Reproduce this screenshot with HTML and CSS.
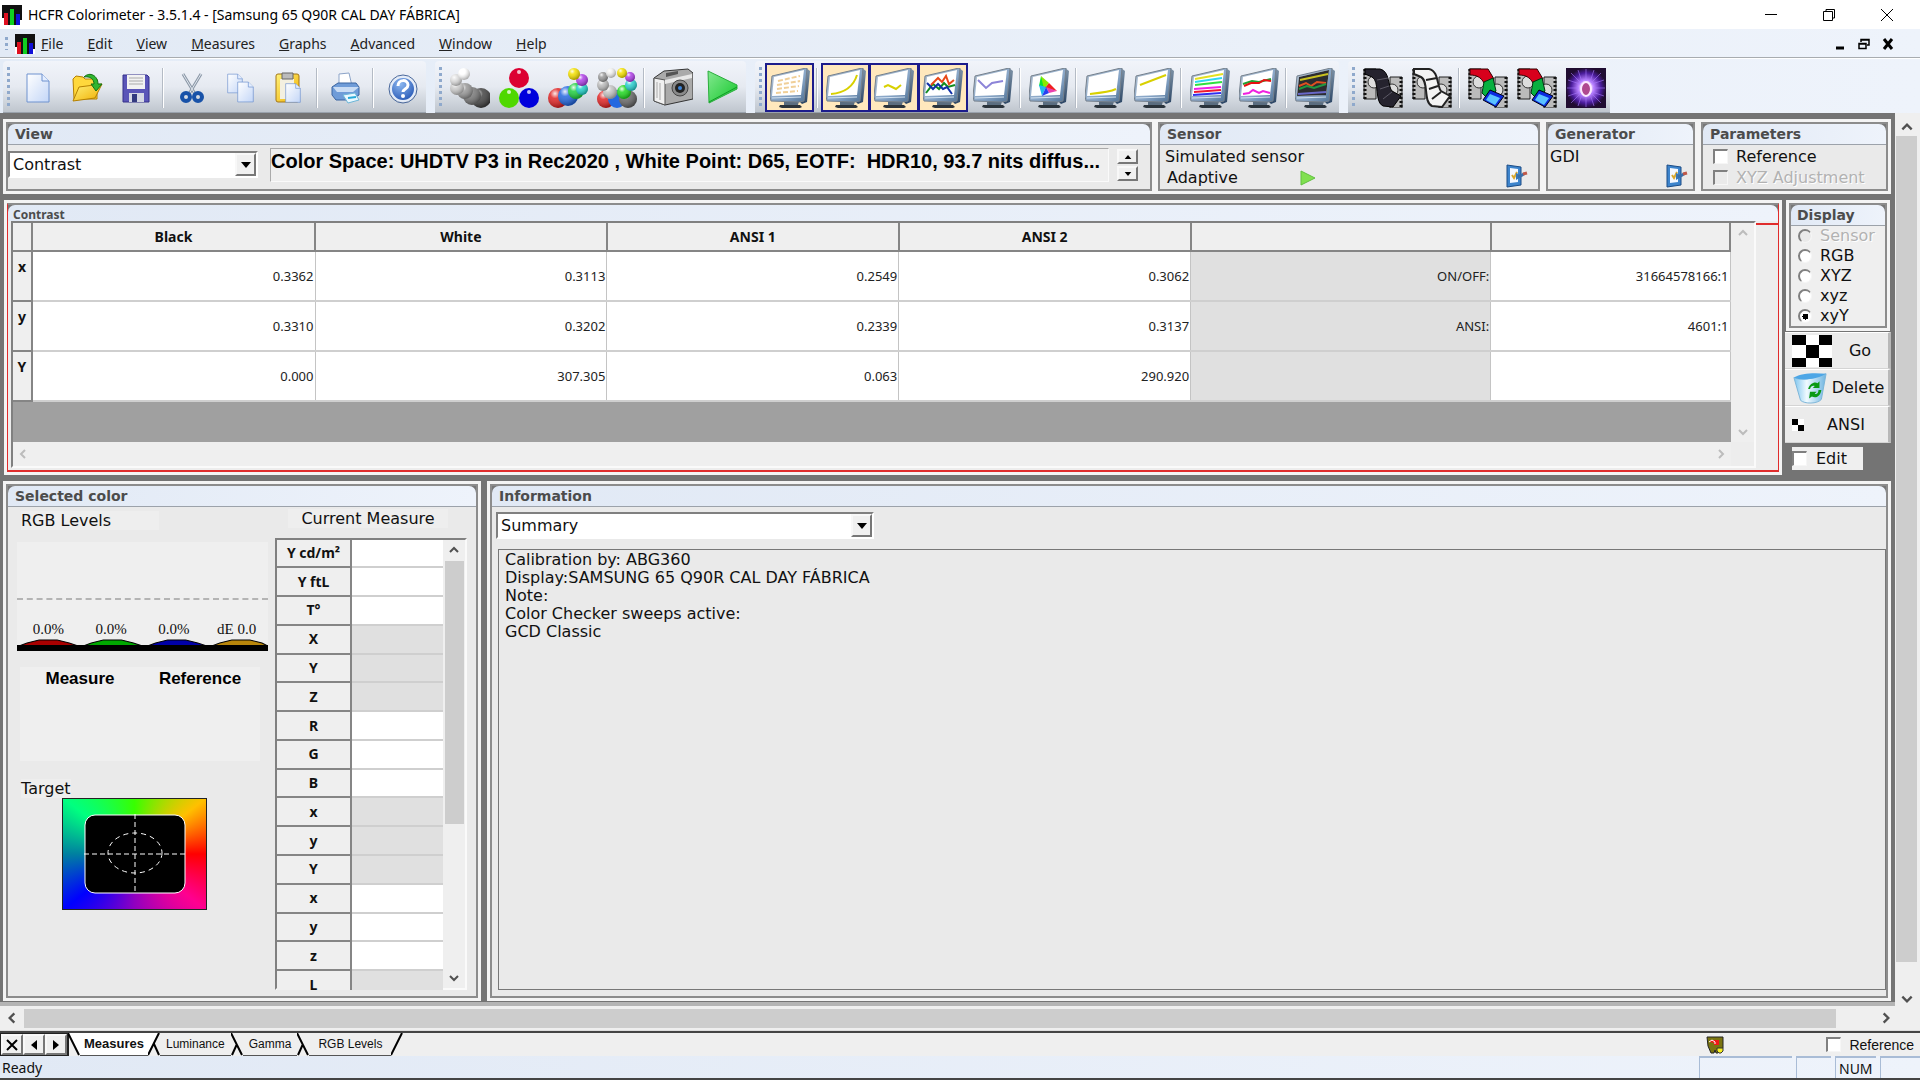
FILE: index.html
```html
<!DOCTYPE html>
<html lang="en">
<head>
<meta charset="utf-8">
<title>HCFR Colorimeter</title>
<link rel="stylesheet" href="styles.css">
</head>
<body>
<svg class="defs" aria-hidden="true">
  <defs>
    <linearGradient id="page" x1="0" y1="0" x2="1" y2="1"><stop offset="0" stop-color="#fff"/><stop offset="1" stop-color="#c3d6f7"/></linearGradient>
    <linearGradient id="bezel" x1="0" y1="0" x2="1" y2="1"><stop offset="0" stop-color="#b9c6d4"/><stop offset=".6" stop-color="#86a4c6"/><stop offset="1" stop-color="#4f7194"/></linearGradient>
    <linearGradient id="side" x1="0" y1="0" x2="0" y2="1"><stop offset="0" stop-color="#7e93a8"/><stop offset="1" stop-color="#2c4665"/></linearGradient>
    <linearGradient id="gold" x1="0" y1="0" x2="1" y2="1"><stop offset="0" stop-color="#fff27a"/><stop offset="1" stop-color="#f0ae00"/></linearGradient>
    <linearGradient id="play" x1="0" y1="0" x2="1" y2="1"><stop offset="0" stop-color="#84e890"/><stop offset="1" stop-color="#14c82c"/></linearGradient>
    <linearGradient id="bin" x1="0" y1="0" x2="1" y2="0"><stop offset="0" stop-color="#7cc4ee"/><stop offset=".4" stop-color="#f0faff"/><stop offset="1" stop-color="#6fb4e0"/></linearGradient>
    <radialGradient id="shine" cx=".35" cy=".28" r=".7"><stop offset="0" stop-color="#fff" stop-opacity=".9"/><stop offset=".35" stop-color="#fff" stop-opacity=".15"/><stop offset="1" stop-color="#000" stop-opacity=".3"/></radialGradient>
    <radialGradient id="blue" cx=".4" cy=".3" r=".8"><stop offset="0" stop-color="#8db8f0"/><stop offset="1" stop-color="#1d4fb0"/></radialGradient>
    <radialGradient id="nova"><stop offset="0" stop-color="#c05a9a"/><stop offset=".13" stop-color="#b05090"/><stop offset=".2" stop-color="#fff0ff"/><stop offset=".4" stop-color="#b880ff"/><stop offset=".75" stop-color="#4a1c9c"/><stop offset="1" stop-color="#200c30"/></radialGradient>
    <symbol id="logo" viewBox="0 0 20 20"><path d="M0 0h20v20H0z" fill="#111"/><path d="M2 8h4v12H2z" fill="#e01020"/><path d="M8 4h4v16H8z" fill="#10d020"/><path d="M14 9h4v11h-4z" fill="#1010d8"/><path d="M0 13h2v7H0zM18 15h2v5h-2z" fill="#fff"/></symbol>
    <symbol id="monitor" viewBox="0 0 40 40">
      <path d="M10 37h20l2 2-2 1H12l-3-1z" fill="#2b343c"/>
      <path d="M14 33h15l-1 4H14z" fill="#5a6d80"/>
      <path d="M36 0l4 3-3 31-5 2-3-3z" fill="url(#side)"/>
      <path d="M2 8L36 0h1l-3 33-5 1-28-1-1-5z" fill="url(#bezel)" stroke="#75808c"/>
      <path d="M4 9L34 2l-3 25-29 1z" fill="#fff"/>
      <path d="M2 30l29-1" stroke="#d3e2f1" stroke-width="1"/>
    </symbol>
    <symbol id="reel" viewBox="0 0 40 40">
      <path d="M1 1v30h12V1zM27 9v31h12V9z" fill="#bbb" stroke="#222"/>
      <path d="M2 1v30M38 9v31" stroke="#111" stroke-width="3" stroke-dasharray="2 2"/>
      <circle cx="11" cy="14" r="6" fill="#ddd" stroke="#333"/><circle cx="29" cy="22" r="6" fill="#ddd" stroke="#333"/>
    </symbol>
    <symbol id="rgbreel" viewBox="0 0 40 40">
      <use href="#reel"/>
      <path d="M2 1h18l6 10-10 4c-3-6-8-8-14-8z" fill="#d8001c" stroke="#300"/>
      <path d="M16 14l9-4 3 13-8 8-6-6z" fill="#08b040" stroke="#031"/>
      <path d="M22 22l14 6-8 11-13-7z" fill="#0a2ae0" stroke="#001"/><path d="M22 26l10 4-5 7-9-5z" fill="#5ac2ff"/>
    </symbol>
    <symbol id="sheet" viewBox="0 0 24 30"><path d="M1 1h15l7 7v21H1z" fill="url(#page)" stroke="#6f92cf"/><path d="M16 1v7h7" fill="#e4eeff" stroke="#6f92cf"/></symbol>
    <symbol id="config" viewBox="0 0 24 24"><path d="M3 1l14 2v18l-14 2z" fill="#3d84cc" stroke="#1c4c86"/><path d="M6 4l8 1v13l-8 1z" fill="#f4f8ff"/><path d="M8 11l2 3 3-6" fill="none" stroke="#d8a830" stroke-width="2"/><path d="M12 16v-7l7 3z" fill="#3a78b8"/><path d="M14 13l6-3" stroke="#3a6ea8" stroke-width="3"/><path d="M19 10l4-1" stroke="#c05848" stroke-width="3"/></symbol>
    <symbol id="up" viewBox="0 0 12 12"><path d="M2 8l4-4 4 4" fill="none" stroke="currentColor" stroke-width="2"/></symbol>
    <symbol id="down" viewBox="0 0 12 12"><path d="M2 4l4 4 4-4" fill="none" stroke="currentColor" stroke-width="2"/></symbol>
    <symbol id="left" viewBox="0 0 12 12"><path d="M8 2L4 6l4 4" fill="none" stroke="currentColor" stroke-width="2"/></symbol>
    <symbol id="right" viewBox="0 0 12 12"><path d="M4 2l4 4-4 4" fill="none" stroke="currentColor" stroke-width="2"/></symbol>
    <symbol id="tri-down" viewBox="0 0 10 6"><path d="M0 0h10L5 6z"/></symbol>
    <symbol id="tri-up" viewBox="0 0 10 6"><path d="M0 6h10L5 0z"/></symbol>
  </defs>
</svg>

<header class="titlebar">
  <svg class="logo"><use href="#logo"/></svg>
  <h1>HCFR Colorimeter - 3.5.1.4 - [Samsung 65 Q90R CAL DAY FÁBRICA]</h1>
  <div class="window-buttons">
    <button aria-label="Minimize"><svg width="14" height="14" viewBox="0 0 14 14"><path d="M1 6.500h12" stroke="#000"/></svg></button>
    <button aria-label="Restore"><svg width="14" height="14" viewBox="0 0 14 14"><path d="M1.500 3.500h9v9h-9zM4 3V1.500h8.500V10H11" fill="none" stroke="#000"/></svg></button>
    <button aria-label="Close"><svg width="14" height="14" viewBox="0 0 14 14"><path d="M1 1l12 12M13 1L1 13" stroke="#000"/></svg></button>
  </div>
</header>

<nav class="menubar">
  <span class="grip"></span>
  <svg class="logo"><use href="#logo"/></svg>
  <a href="#"><u>F</u>ile</a><a href="#"><u>E</u>dit</a><a href="#"><u>V</u>iew</a><a href="#"><u>M</u>easures</a><a href="#"><u>G</u>raphs</a><a href="#"><u>A</u>dvanced</a><a href="#"><u>W</u>indow</a><a href="#"><u>H</u>elp</a>
  <div class="mdi-buttons">
    <button aria-label="Minimize document"><svg width="12" height="12" viewBox="0 0 12 12"><path d="M2 10h8" stroke="#000" stroke-width="3"/></svg></button>
    <button aria-label="Restore document"><svg width="12" height="12" viewBox="0 0 12 12"><path d="M1 5.500h7v5H1zM3 4V1.500h8V7H9M3 2h8M1 6h7" fill="none" stroke="#000" stroke-width="1.500"/></svg></button>
    <button aria-label="Close document"><svg width="12" height="12" viewBox="0 0 12 12"><path d="M2 1l8 10M10 1L2 11" stroke="#000" stroke-width="3"/></svg></button>
  </div>
</nav>

<div class="toolbars">
  <div class="toolbar">
    <span class="grip"></span>
    <button class="tool" aria-label="New"><svg class="doc-icon" viewBox="0 0 32 32"><use href="#sheet" x="4" y="1" width="24" height="30"/></svg></button>
    <button class="tool" aria-label="Open"><svg class="doc-icon" viewBox="0 0 32 32"><path d="M2 7l3-3 7 1 2 2h12v20H3z" fill="#ffd83c" stroke="#b58000"/><path d="M2 29l6-14 23-3-7 14z" fill="url(#gold)" stroke="#b58000"/><path d="M13 5c6-6 14-1 14 7h4l-6 7-5-7h3c0-5-4-8-10-7z" fill="#2fb52f" stroke="#137013"/></svg></button>
    <button class="tool" aria-label="Save"><svg class="doc-icon" viewBox="0 0 32 32"><path d="M3 3h24l2 2v25H3z" fill="#5a55b8" stroke="#35308a"/><path d="M7 3h18v14H7z" fill="#f2f2f2"/><path d="M9 6h14M9 9h14M9 12h14" stroke="#aaa"/><path d="M9 21h15v9H9z" fill="#d5d8e4"/><path d="M12 22h5v8h-5z" fill="#333a80"/></svg></button>
    <span class="sep"></span>
    <button class="tool" aria-label="Cut"><svg class="doc-icon" viewBox="0 0 32 32"><path d="M7 2l12 20M25 2L13 22" stroke="#8d99a8" stroke-width="3"/><path d="M7 2l12 20M25 2L13 22" stroke="#dfe6ee"/><g fill="none" stroke="#1852a8" stroke-width="4"><ellipse cx="10" cy="25" rx="4" ry="4"/><ellipse cx="22" cy="25" rx="4" ry="4"/></g></svg></button>
    <button class="tool" aria-label="Copy"><svg class="doc-icon" viewBox="0 0 32 32"><use href="#sheet" x="2" y="1" width="16" height="21"/><use href="#sheet" x="12" y="9" width="17" height="22"/></svg></button>
    <button class="tool" aria-label="Paste"><svg class="doc-icon" viewBox="0 0 32 32"><rect x="2" y="2" width="23" height="28" rx="2" fill="url(#gold)" stroke="#a37618"/><path d="M6 7h14v20H6z" fill="#f4f0e0"/><path d="M8 1h11v6H8z" fill="#bbb" stroke="#666"/><use href="#sheet" x="11" y="11" width="16" height="20"/></svg></button>
    <span class="sep"></span>
    <button class="tool" aria-label="Print"><svg class="doc-icon" viewBox="0 0 32 32"><path d="M9 2l10-1 3 13H9z" fill="#fff" stroke="#8ca4c8"/><path d="M2 15l6-4h18l3 4v8l-8 5H6l-4-5z" fill="#6f9cd8" stroke="#3b64a0"/><path d="M3 15h26l-6 5H7z" fill="#c9dcf4"/><path d="M13 23l12-2 4 7-11 3z" fill="#e9f8ff" stroke="#6cb6d8"/><path d="M18 26l8-1" stroke="#26a8d8" stroke-width="2"/></svg></button>
    <span class="sep"></span>
    <button class="tool" aria-label="Help"><svg class="doc-icon" viewBox="0 0 32 32"><circle cx="17" cy="17" r="12" fill="url(#blue)" stroke="#e4ecf8" stroke-width="2"/><circle cx="17" cy="17" r="14" fill="none" stroke="#49689c"/><path d="M12 14c0-7 10-7 10-1 0 4-5 4-5 7" fill="none" stroke="#fff" stroke-width="3"/><circle cx="17" cy="24" r="2" fill="#fff"/></svg></button>
  </div>

  <div class="toolbar">
    <span class="grip"></span>
    <button class="tool" aria-label="Measure grays"><svg class="icon" viewBox="0 0 40 40"><circle cx="31" cy="30" r="10" fill="#444"/><circle cx="31" cy="30" r="10" fill="url(#shine)"/><circle cx="22" cy="28" r="9" fill="#777"/><circle cx="22" cy="28" r="9" fill="url(#shine)"/><circle cx="15" cy="23" r="8" fill="#999"/><circle cx="15" cy="23" r="8" fill="url(#shine)"/><circle cx="7" cy="20" r="7" fill="#ccc"/><circle cx="7" cy="20" r="7" fill="url(#shine)"/><circle cx="6" cy="12" r="6" fill="#ddd"/><circle cx="6" cy="12" r="6" fill="url(#shine)"/><circle cx="14" cy="6" r="6" fill="#fff"/><circle cx="14" cy="6" r="6" fill="url(#shine)"/></svg></button>
    <button class="tool" aria-label="Measure primaries"><svg class="icon" viewBox="0 0 40 40"><circle cx="20" cy="10" r="10" fill="#dc0032"/><circle cx="10" cy="30" r="10" fill="#4fd800"/><circle cx="30" cy="30" r="10" fill="#0000dc"/><g fill="#fff" opacity=".75"><circle cx="20" cy="4" r="2"/><circle cx="10" cy="24" r="2"/><circle cx="30" cy="24" r="2"/></g></svg></button>
    <button class="tool" aria-label="Measure secondaries"><svg class="icon" viewBox="0 0 40 40"><circle cx="10" cy="30" r="10" fill="#e02424"/><circle cx="10" cy="30" r="10" fill="url(#shine)"/><circle cx="20" cy="28" r="10" fill="#2468e0"/><circle cx="20" cy="28" r="10" fill="url(#shine)"/><circle cx="28" cy="23" r="8" fill="#20d040"/><circle cx="28" cy="23" r="8" fill="url(#shine)"/><circle cx="34" cy="21" r="6" fill="#20d0c8"/><circle cx="34" cy="21" r="6" fill="url(#shine)"/><circle cx="34" cy="12" r="6" fill="#b040e8"/><circle cx="34" cy="12" r="6" fill="url(#shine)"/><circle cx="26" cy="6" r="6" fill="#f4e000"/><circle cx="26" cy="6" r="6" fill="url(#shine)"/></svg></button>
    <button class="tool" aria-label="Measure grays and colors"><svg class="icon" viewBox="0 0 40 40"><circle cx="9" cy="31" r="9" fill="#e02424"/><circle cx="9" cy="31" r="9" fill="url(#shine)"/><circle cx="20" cy="31" r="9" fill="#2468e0"/><circle cx="31" cy="31" r="9" fill="#666"/><circle cx="31" cy="31" r="9" fill="url(#shine)"/><circle cx="27" cy="24" r="7" fill="#20d820"/><circle cx="27" cy="24" r="7" fill="url(#shine)"/><circle cx="13" cy="24" r="7" fill="#c4c4c4"/><circle cx="13" cy="24" r="7" fill="url(#shine)"/><circle cx="34" cy="17" r="6" fill="#28d0d0"/><circle cx="34" cy="17" r="6" fill="url(#shine)"/><circle cx="6" cy="17" r="6" fill="#bbb"/><circle cx="6" cy="17" r="6" fill="url(#shine)"/><circle cx="6" cy="9" r="5" fill="#999"/><circle cx="6" cy="9" r="5" fill="url(#shine)"/><circle cx="33" cy="9" r="5" fill="#b040e8"/><circle cx="33" cy="9" r="5" fill="url(#shine)"/><circle cx="14" cy="5" r="5" fill="#eee"/><circle cx="14" cy="5" r="5" fill="url(#shine)"/><circle cx="25" cy="5" r="5" fill="#f4e000"/><circle cx="25" cy="5" r="5" fill="url(#shine)"/></svg></button>
    <span class="sep"></span>
    <button class="tool" aria-label="Camera"><svg class="icon" viewBox="0 0 40 40"><path d="M1 10l10-7 24-2 5 4v26L12 37 1 33z" fill="#aaa" stroke="#333"/><path d="M1 10l11 2v25L1 33z" fill="#f0f0f0" stroke="#555"/><path d="M12 12l27-6v4l-27 6z" fill="#e8e8e8"/><path d="M4 14v16M7 15v17" stroke="#aaa" stroke-width="1"/><path d="M13 5l12-2v3l-12 3z" fill="#555"/><circle cx="27" cy="20" r="8" fill="#8a8a8a" stroke="#444"/><circle cx="27" cy="20" r="5" fill="#222"/><circle cx="27" cy="20" r="2" fill="#3c84d8"/></svg></button>
    <button class="tool" aria-label="Run"><svg class="icon" viewBox="0 0 40 40"><path d="M6 3L35 17v4L7 35z" fill="url(#play)" stroke="#2aae3c"/><path d="M7 34l28-15" stroke="#0e9c24"/></svg></button>
  </div>

  <div class="toolbar">
    <span class="grip"></span>
    <button class="tool on" aria-label="Measures view"><svg class="icon" viewBox="0 0 40 40"><use href="#monitor"/><path d="M8 13l22-5M7 17l23-4M7 21l22-3M6 25l22-2" stroke="#f0cf98" stroke-width="2" stroke-dasharray="5 2"/></svg></button>
    <span class="sep"></span>
    <button class="tool on" aria-label="Luminance view"><svg class="icon" viewBox="0 0 40 40"><use href="#monitor"/><path d="M5 26c12-1 22-6 26-19" fill="none" stroke="#d8d000" stroke-width="2"/></svg></button>
    <button class="tool on" aria-label="Gamma view"><svg class="icon" viewBox="0 0 40 40"><use href="#monitor"/><path d="M10 19l4-2 4 2 4 2 5-4" fill="none" stroke="#d8d000" stroke-width="2"/></svg></button>
    <button class="tool on" aria-label="RGB levels view"><svg class="icon" viewBox="0 0 40 40"><use href="#monitor"/><g fill="none" stroke-width="2"><path d="M3 25l7-9 6 5 5-6 4 4 7-2" stroke="#108c20"/><path d="M4 15l6 6 5-5 5 5 4-2 5 7" stroke="#1030a8"/><path d="M8 17l7-7 4 4 4-6 3 8 5-4" stroke="#e84818"/></g></svg></button>
    <button class="tool" aria-label="Color temperature view"><svg class="icon" viewBox="0 0 40 40"><use href="#monitor"/><path d="M5 12l8 8 6-5 11-2" fill="none" stroke="#8c84d8" stroke-width="2"/></svg></button>
    <span class="sep"></span>
    <button class="tool" aria-label="CIE chart"><svg class="icon" viewBox="0 0 40 40"><use href="#monitor"/><path d="M12 8l-2 10 8 2z" fill="#0ce030"/><path d="M12 8l8 7-5 6z" fill="#8ce800"/><path d="M20 15l8 8-12-3z" fill="#f02020"/><path d="M10 17l7 2-4 9z" fill="#20b8f0"/><path d="M17 19l11 4-8 2z" fill="#e840b0"/><path d="M17 19l3 6-7 3z" fill="#2840f0"/></svg></button>
    <span class="sep"></span>
    <button class="tool" aria-label="Near black view"><svg class="icon" viewBox="0 0 40 40"><use href="#monitor"/><path d="M5 26c10-1 20-2 26-5" fill="none" stroke="#d8d000" stroke-width="2"/></svg></button>
    <button class="tool" aria-label="Near white view"><svg class="icon" viewBox="0 0 40 40"><use href="#monitor"/><path d="M6 17l26-10" stroke="#d8d000" stroke-width="2"/></svg></button>
    <span class="sep"></span>
    <button class="tool" aria-label="Luminance saturation"><svg class="icon" viewBox="0 0 40 40"><use href="#monitor"/><g stroke-width="2" stroke-linecap="butt"><path d="M5 11l28-5" stroke="#e4e020"/><path d="M5 14l27-4" stroke="#30d8f0"/><path d="M5 17l27-3" stroke="#30e040"/><path d="M4 21l27-2" stroke="#f020e8"/><path d="M4 24l27-2" stroke="#f01830"/><path d="M3 27l28-2" stroke="#3030f0"/></g></svg></button>
    <button class="tool" aria-label="Saturation shifts"><svg class="icon" viewBox="0 0 40 40"><use href="#monitor"/><g fill="none" stroke-width="2"><path d="M4 16l9-3 7 1 12-3" stroke="#20a030"/><path d="M5 18l7-3 8 0 5-3 7 1" stroke="#e81010"/><path d="M4 26l6-1 4-3 6 3 4-2 7 2" stroke="#f020e0"/></g></svg></button>
    <span class="sep"></span>
    <button class="tool" aria-label="Combined view"><svg class="icon" viewBox="0 0 40 40"><use href="#monitor"/><path d="M4 9L34 2l-3 25-29 1z" fill="#2c2c30"/><g fill="none" stroke-width="2"><path d="M5 12l28-6" stroke="#c8c020"/><path d="M4 18l7-3 5 3 6-4 9 1" stroke="#e05020"/><path d="M4 21l8-3 7 2 12-4" stroke="#209840"/><path d="M3 26l28-2" stroke="#6868c8"/></g></svg></button>
  </div>

  <div class="toolbar">
    <span class="grip"></span>
    <button class="tool" aria-label="Black level pattern"><svg class="icon" viewBox="0 0 40 40"><use href="#reel"/><path d="M2 1h15c10 2 8 18 12 22l9 5-8 11-10-1c-9-4-3-25-11-29l-7-3z" fill="#25232e" stroke="#000"/><path d="M14 12l11-2M17 21l9-3M20 31l9-7" stroke="#5c5a66"/></svg></button>
    <button class="tool" aria-label="White level pattern"><svg class="icon" viewBox="0 0 40 40"><use href="#reel"/><path d="M2 1h15c10 2 8 18 12 22l9 5-8 11-10-1c-9-4-3-25-11-29l-7-3z" fill="#f4f4f4" stroke="#222" stroke-width="2"/><path d="M14 12l11-2M17 21l9-3M20 31l9-7" stroke="#222" stroke-width="2"/></svg></button>
    <span class="sep"></span>
    <button class="tool" aria-label="Color pattern"><svg class="icon"><use href="#rgbreel"/></svg></button>
    <button class="tool" aria-label="Color pattern 2"><svg class="icon"><use href="#rgbreel"/></svg></button>
    <button class="tool" aria-label="Pattern picture"><svg class="icon" viewBox="0 0 40 40"><path d="M0 0h40v40H0z" fill="url(#nova)"/><g stroke="#a878ff" opacity=".6"><path d="M20 1v12M20 27v12M1 20h12M27 20h12M5 5l10 10M35 5L25 15M5 35l10-10M35 35L25 25M12 2l4 12M28 2l-4 12M12 38l4-12M28 38l-4-12M2 12l12 4M38 12l-12 4M2 28l12-4M38 28l-12-4"/></g><ellipse cx="20" cy="21" rx="5" ry="7" fill="#b04890" stroke="#fbe8ff" stroke-width="2"/></svg></button>
  </div>
</div>

<main class="client">
  <div class="workspace">
    <div class="row">
      <section class="panel grow">
        <h2>View</h2>
        <div class="body view-body">
          <div class="combo view-combo"><select aria-label="View"><option>Contrast</option></select><span class="drop"><svg width="10" height="6"><use href="#tri-down"/></svg></span></div>
          <p class="color-space">Color Space: UHDTV P3 in Rec2020 , White Point: D65, EOTF:&nbsp; HDR10, 93.7 nits diffus...</p>
          <div class="spin"><button aria-label="Previous"><svg width="8" height="4"><use href="#tri-up"/></svg></button><button aria-label="Next"><svg width="8" height="4"><use href="#tri-down"/></svg></button></div>
        </div>
      </section>
      <section class="panel sensor">
        <h2>Sensor</h2>
        <div class="body device-body">
          <div class="device-text"><p>Simulated sensor</p><p class="adaptive">Adaptive <svg width="16" height="16" viewBox="0 0 16 16"><path d="M1 1l14 7-14 7z" fill="#80e050" stroke="#60c040"/></svg></p></div>
          <button class="config" aria-label="Configure sensor"><svg width="24" height="24"><use href="#config"/></svg></button>
        </div>
      </section>
      <section class="panel generator">
        <h2>Generator</h2>
        <div class="body device-body">
          <div class="device-text gdi"><p>GDI</p></div>
          <button class="config" aria-label="Configure generator"><svg width="24" height="24"><use href="#config"/></svg></button>
        </div>
      </section>
      <section class="panel parameters">
        <h2>Parameters</h2>
        <div class="body options">
          <label><input type="checkbox">Reference</label>
          <label class="off"><input type="checkbox" disabled>XYZ Adjustment</label>
        </div>
      </section>
    </div>

    <div class="row middle">
      <section class="panel contrast">
        <h2>Contrast</h2>
        <div class="contrast-body">
          <div class="grid-frame">
            <div class="grid-view">
              <table class="grid">
                <colgroup><col class="c-head"><col class="c-a"><col class="c-b"><col class="c-b"><col class="c-b"><col class="c-c"><col></colgroup>
                <thead><tr><th></th><th>Black</th><th>White</th><th>ANSI 1</th><th>ANSI 2</th><th></th><th></th></tr></thead>
                <tbody>
                  <tr><th>x</th><td>0.3362</td><td>0.3113</td><td>0.2549</td><td>0.3062</td><td class="shade">ON/OFF:</td><td>31664578166:1</td></tr>
                  <tr><th>y</th><td>0.3310</td><td>0.3202</td><td>0.2339</td><td>0.3137</td><td class="shade">ANSI:</td><td>4601:1</td></tr>
                  <tr><th>Y</th><td>0.000</td><td>307.305</td><td>0.063</td><td>290.920</td><td class="shade"></td><td></td></tr>
                </tbody>
              </table>
            </div>
            <div class="vbar idle"><svg width="12" height="12"><use href="#up"/></svg><svg width="12" height="12"><use href="#down"/></svg></div>
            <div class="hbar idle"><svg width="12" height="12"><use href="#left"/></svg><svg width="12" height="12"><use href="#right"/></svg></div>
          </div>
          <div class="red-edge"></div>
        </div>
      </section>
      <aside class="side">
        <section class="panel display">
          <h2>Display</h2>
          <div class="body options radios">
            <label class="off"><input type="radio" name="space" disabled>Sensor</label>
            <label><input type="radio" name="space">RGB</label>
            <label><input type="radio" name="space">XYZ</label>
            <label><input type="radio" name="space">xyz</label>
            <label><input type="radio" name="space" checked>xyY</label>
          </div>
        </section>
        <button class="action"><svg width="40" height="32" viewBox="0 0 40 32"><path d="M0 0h40v32H0z" fill="#fff"/><path d="M0 0h14v10H0zM27 0h13v10H27zM14 10h13v13H14zM0 23h14v9H0zM27 23h13v9H27z"/></svg><span>Go</span></button>
        <button class="action"><svg width="36" height="32" viewBox="0 0 38 32"><path d="M2 5c8 4 20 0 34-4l-5 27c-4 5-18 5-22 1z" fill="url(#bin)" stroke="#7ab4d8"/><path d="M2 5C10 0 24 0 36 1 26 7 10 9 2 5z" fill="#4da6e6"/><path d="M17 17c2-6 7-8 10-6l2-2v7h-7l2-2c-2-1-4 0-5 3zM31 18c-1 7-6 9-10 7l-3 2 1-7h7l-2 2c2 1 4-1 4-4z" fill="#0a9a14"/></svg><span>Delete</span></button>
        <button class="action"><svg width="12" height="12" viewBox="0 0 12 12"><path d="M0 0h12v12H0z" fill="#fff"/><path d="M0 0h6v6H0zM6 6h6v6H6z"/></svg><span>ANSI</span></button>
        <label class="edit"><input type="checkbox">Edit</label>
      </aside>
    </div>

    <div class="row bottom">
      <section class="panel selected">
        <h2>Selected color</h2>
        <div class="body selected-body">
          <div class="levels-col">
            <h3 class="tag levels-tag">RGB Levels</h3>
            <div class="levels">
              <div class="level-values"><span>0.0%</span><span>0.0%</span><span>0.0%</span><span>dE 0.0</span></div>
              <svg width="100%" height="12" viewBox="0 0 250 12" preserveAspectRatio="none"><g stroke="#000"><path d="M2 7l8-3 12-3h18l12 3 9 3z" fill="#a80000"/><path d="M66 7l8-3 12-3h18l12 3 9 3z" fill="#00a800"/><path d="M130 7l8-3 12-3h18l12 3 9 3z" fill="#0000a8"/><path d="M194 7l8-3 12-3h18l12 3 6 3z" fill="#b8860b"/></g><path d="M0 6h250v6H0z"/></svg>
            </div>
            <div class="compare"><b>Measure</b><b>Reference</b></div>
            <h3 class="tag target-tag">Target</h3>
            <div class="target">
              <svg width="102" height="80" viewBox="0 0 102 80"><rect x="1" y="1" width="100" height="78" rx="10" stroke="#fff"/><path d="M0 40h102M51 0v80" stroke="#fff" stroke-dasharray="5 3"/><ellipse cx="51" cy="39" rx="27" ry="20" fill="none" stroke="#fff" stroke-dasharray="5 4"/></svg>
            </div>
          </div>
          <div class="measure-col">
            <h3 class="tag measure-tag">Current Measure</h3>
            <div class="measure-frame">
              <div class="measure-view">
                <table class="measures">
                  <tr><th>Y cd/m²</th><td></td></tr><tr><th>Y ftL</th><td></td></tr><tr><th>T°</th><td></td></tr>
                  <tr class="shade"><th>X</th><td></td></tr><tr class="shade"><th>Y</th><td></td></tr><tr class="shade"><th>Z</th><td></td></tr>
                  <tr><th>R</th><td></td></tr><tr><th>G</th><td></td></tr><tr><th>B</th><td></td></tr>
                  <tr class="shade"><th>x</th><td></td></tr><tr class="shade"><th>y</th><td></td></tr><tr class="shade"><th>Y</th><td></td></tr>
                  <tr><th>x</th><td></td></tr><tr><th>y</th><td></td></tr><tr><th>z</th><td></td></tr>
                  <tr class="shade"><th>L</th><td></td></tr>
                </table>
              </div>
              <div class="vbar"><svg width="12" height="12"><use href="#up"/></svg><span class="thumb part"></span><svg width="12" height="12"><use href="#down"/></svg></div>
            </div>
          </div>
        </div>
      </section>
      <section class="panel grow">
        <h2>Information</h2>
        <div class="body info-body">
          <div class="combo info-combo"><select aria-label="Information"><option>Summary</option></select><span class="drop"><svg width="10" height="6"><use href="#tri-down"/></svg></span></div>
          <div class="summary">Calibration by: ABG360<br>Display:SAMSUNG 65 Q90R CAL DAY FÁBRICA<br>Note:<br>Color Checker sweeps active:<br>GCD Classic</div>
        </div>
      </section>
    </div>
  </div>
  <div class="vbar page-vbar"><svg width="14" height="14"><use href="#up"/></svg><span class="thumb"></span><svg width="14" height="14"><use href="#down"/></svg></div>
</main>
<div class="hbar page-hbar"><svg width="14" height="14"><use href="#left"/></svg><span class="thumb"></span><svg width="14" height="14"><use href="#right"/></svg></div>

<div class="tabstrip">
  <div class="tab-nav">
    <button aria-label="Close view"><svg width="12" height="12" viewBox="0 0 12 12"><path d="M1 1l10 10M11 1L1 11" stroke="#000" stroke-width="2"/></svg></button>
    <button aria-label="Previous view"><svg width="6" height="10" viewBox="0 0 6 10"><path d="M6 0v10L0 5z"/></svg></button>
    <button aria-label="Next view"><svg width="6" height="10" viewBox="0 0 6 10"><path d="M0 0v10l6-5z"/></svg></button>
  </div>
  <svg class="slant first" viewBox="0 0 12 23"><path d="M0 0h12v22h-1z" fill="#fff"/><path d="M0 0l11 22" stroke="#000" stroke-width="2"/></svg>
  <button class="tab active">Measures</button>
  <svg class="slant" viewBox="0 0 12 23"><path d="M0 0h11L1 22H0z" fill="#fff"/><path d="M11 0L0 22M6 11l5 11" stroke="#000" stroke-width="2"/></svg>
  <button class="tab">Luminance</button>
  <svg class="slant" viewBox="0 0 12 23"><path d="M0 0l11 22M6 11L1 22" stroke="#000" stroke-width="2"/></svg>
  <button class="tab">Gamma</button>
  <svg class="slant" viewBox="0 0 12 23"><path d="M0 0l11 22M6 11L1 22" stroke="#000" stroke-width="2"/></svg>
  <button class="tab wide">RGB Levels</button>
  <svg class="slant" viewBox="0 0 12 23"><path d="M11 0L0 22" stroke="#000" stroke-width="2"/></svg>
  <svg class="mask" viewBox="0 0 18 18"><path d="M1 1h16v11l-5 5h-2l-1-3-1 3H5l-3-7z" fill="#7a7410" stroke="#222"/><path d="M4 4h9v5H8V7L4 6z" fill="#f01818"/><path d="M3 6l3-2 3 2v2" fill="none" stroke="#fff"/><path d="M11 12h6v3l-2 2h-2l-2-2z" fill="#f8f020" stroke="#333"/></svg>
  <label class="tab-reference"><input type="checkbox">Reference</label>
</div>
<footer class="statusbar"><span class="ready">Ready</span><span class="cell cell-a"></span><span class="cell cell-b"></span><span class="cell cell-c">NUM</span><span class="cell cell-d"></span></footer>
</body>
</html>
```
FILE: styles.css
```css
* { box-sizing: border-box; }

body {
  margin: 0;
  min-height: 100vh;
  display: flex;
  flex-direction: column;
  background: #efefef;
  color: #111;
  font: 16px/18px "DejaVu Sans", Verdana, sans-serif;
}
h1, h2, h3, p { margin: 0; font-weight: normal; }
button { margin: 0; padding: 0; border: 0; background: none; color: inherit; font: inherit; display: flex; align-items: center; justify-content: center; }
svg { display: block; flex: none; }
.defs { position: absolute; width: 0; height: 0; }
.logo { width: 20px; height: 20px; }

/* window chrome */
.titlebar { display: flex; align-items: center; height: 29px; padding: 0 26px 0 2px; background: #fff; }
.titlebar h1 { margin-left: 6px; flex: 1; font: 14px/20px "Noto Sans", sans-serif; color: #000; }
.window-buttons { display: flex; gap: 44px; }
.menubar { display: flex; align-items: center; height: 29px; padding: 1px 26px 0 5px; background: linear-gradient(90deg, #e2eaf5, #eef3fb); border-bottom: 1px solid #a8acb0; font: 14px/20px "Noto Sans", sans-serif; }
.menubar .logo { margin: 0 6px 0 7px; }
.menubar a { margin-right: 24px; color: #222; text-decoration: none; }
.mdi-buttons { display: flex; gap: 12px; margin-left: auto; }
.grip { width: 3px; align-self: stretch; margin: 7px 0; background: repeating-linear-gradient(#8fa9cc 0 3px, transparent 3px 6px); }

.toolbars { display: flex; gap: 9px; height: 55px; padding: 2px 0 0 3px; background: linear-gradient(90deg, #e4ecf7, #eef3fb); border-top: 1px solid #fff; }
.toolbar { display: flex; align-items: center; padding: 2px 0 0 4px; border-radius: 4px 4px 0 0; border-bottom: 1px solid #9aa2ac; background: linear-gradient(#f1f4fa, #e6eaf1 50%, #bfc6ce); }
.toolbar .grip { margin: 4px 3px 5px 0; }
.tool { width: 49px; height: 49px; }
.tool.on { background: #ffe8bd; border: 2px solid #1c1c8c; }
.tool.on + .tool.on { border-left-width: 1px; }
.icon { width: 40px; height: 40px; }
.doc-icon { width: 32px; height: 32px; }
.sep { width: 2px; height: 40px; margin: 0 3px 0 2px; border-left: 1px solid #b4bbc5; background: #fff; }

/* panels */
.client { flex: 1; display: flex; background: #efefef; }
.workspace { flex: 1; min-width: 0; display: flex; flex-direction: column; gap: 4px; padding: 5px 4px 0 3px; background: #747474; border-bottom: 4px solid #b4b4b4; }
.row { display: flex; }
.panel { display: flex; flex-direction: column; background: #777; border: 2px solid #8c8c8c; outline: 3px solid #f4f4f4; margin: 3px; }
.panel h2 { height: 21px; padding-left: 7px; border-bottom: 1px solid #9ca2aa; border-radius: 7px 7px 0 0; background: linear-gradient(90deg, #e1e9f5, #eef3fb); color: #4c4c4c; font-weight: bold; font-size: 14px; line-height: 20px; }
.body { flex: 1; background: #eaeaea; }
.grow { flex: 1; min-width: 0; }
.sensor { width: 382px; }
.generator { width: 149px; }
.parameters { width: 187px; }
.row > .panel { margin-top: 4px; margin-bottom: 4px; }

.combo { display: flex; height: 27px; border: 2px solid #808080; border-right-color: #fff; border-bottom-color: #fff; background: #fff; }
.combo select { flex: 1; min-width: 0; padding: 0 3px; border: 0; appearance: none; background: #fff; color: #111; font: inherit; }
.drop, .spin button, .tab-nav button { display: flex; align-items: center; justify-content: center; background: #f0f0f0; border: 2px solid #f8f8f8; border-right-color: #777; border-bottom-color: #777; }
.drop { width: 21px; }

.view-body { display: flex; align-items: flex-start; padding: 3px 12px 6px 0; height: 43px; }
.view-combo { width: 250px; margin-top: 3px; }
.color-space { flex: 1; min-width: 0; height: 34px; margin: 0 8px 0 12px; overflow: hidden; white-space: nowrap; border: 1px solid #aaa; border-right-color: #fafafa; border-bottom-color: #fafafa; background: #efefef; color: #000; font: bold 20px/24px "Liberation Sans", Arial, sans-serif; }
.spin { display: grid; gap: 2px; margin-top: 1px; }
.spin button { width: 21px; height: 15px; }

.device-body { display: flex; justify-content: space-between; align-items: flex-end; padding: 0 10px 1px 5px; }
.device-text { align-self: stretch; padding-top: 1px; line-height: 21px; }
.gdi { margin-left: -3px; }
.generator .device-body { padding-right: 5px; }
.adaptive { display: flex; align-items: center; justify-content: space-between; width: 151px; padding-left: 2px; }

.options { display: grid; align-content: start; padding: 1px 0 0 10px; }
.options label, .edit, .tab-reference { display: flex; align-items: center; }
.options label { height: 21px; gap: 8px; }
.off { color: #b2b2b2; text-shadow: 1px 1px 0 #fff; }
input { flex: none; appearance: none; margin: 0; width: 15px; height: 15px; border: 2px solid #808080; border-right: 1px solid #f6f6f6; border-bottom: 1px solid #f6f6f6; background: #fff; }
input:disabled { background: #eaeaea; }
input[type="radio"] { width: 14px; height: 14px; border-radius: 50%; }
input[type="radio"]:checked { background: radial-gradient(circle, #000 3px, #fff 3px); }

/* contrast grid */
.row > .contrast { flex: 1; min-width: 0; border: 1px solid #e02c2c; border-top: 2px solid #8c8c8c; border-bottom-width: 2px; margin: 4px 6px 4px 4px; }
.contrast h2 { height: 16px; padding-left: 5px; border: 0; font: bold 12px/20px "Noto Sans", sans-serif; }
.contrast-body { flex: 1; display: flex; padding: 0 0 2px 3px; background: #ededed; }
.grid-frame { flex: 1; min-width: 0; display: grid; grid-template: 1fr 24px / 1fr 23px; border: 2px solid #808080; border-right-color: #fafafa; border-bottom-color: #fafafa; }
.grid-view { min-width: 0; min-height: 219px; background: #a0a0a0; }
.red-edge { width: 22px; border-top: 2px solid #e02c2c; margin-top: 2px; }
.grid, .measures { border-collapse: collapse; table-layout: fixed; width: 100%; font: 13px/18px "Noto Sans", sans-serif; }
.grid th { height: 28px; padding: 0; border-right: 2px solid #858585; border-bottom: 2px solid #858585; background: #efefef; font-size: 14px; }
.grid td { height: 50px; padding: 0 1px 0 0; text-align: right; color: #222; background: #fff; border-right: 1px solid #c4c4c4; border-bottom: 2px solid #cfcfcf; }
.grid tbody th { vertical-align: top; padding-top: 6px; }
.grid td.shade, .measures .shade td { background: #e0e0e0; }
.c-head { width: 19px; }
.c-a { width: 283px; }
.c-b { width: 17%; }
.c-c { width: 300px; }

.vbar { display: flex; flex-direction: column; align-items: center; justify-content: space-between; padding: 4px 0; background: #efefef; color: #505050; }
.hbar { display: flex; align-items: center; justify-content: space-between; padding: 0 4px; background: #efefef; color: #505050; }
.idle { color: #bcbcbc; }
.thumb { background: #cdcdcd; }

/* display column */
.side { width: 106px; display: flex; flex-direction: column; }
.side .display { margin: 4px 4px 4px; }
.side .display h2 { padding-left: 6px; }
.radios { padding: 0 0 0 7px; background: #efefef; height: 99px; }
.radios label { height: 20px; }
.action { justify-content: flex-start; align-self: stretch; height: 37px; padding-left: 7px; background: #ebebeb; border-top: 1px solid #fff; border-bottom: 1px solid #d4d4d4; border-right: 3px solid #b8b8b8; }
.action span { flex: 1; text-align: center; }
.edit { align-self: flex-start; width: 71px; height: 23px; margin: 4px 0 0 7px; gap: 9px; background: #efefef; }

/* lower panels */
.bottom { flex: 1; }
.selected { width: 472px; margin-right: 9px; }
.selected-body { display: flex; justify-content: space-between; padding: 2px 9px 6px 9px; }
.levels-col { width: 251px; }
.tag { width: max-content; background: #eeeeee; font-size: 16px; line-height: 19px; }
.levels-tag { width: 138px; margin: 2px 0 12px 4px; }
.levels { display: flex; flex-direction: column; height: 109px; background: #efefef; }
.levels::before { content: ""; height: 56px; border-bottom: 2px dashed #b4b4b4; }
.level-values { flex: 1; display: grid; grid-template-columns: repeat(4, 1fr); align-items: end; text-align: center; font: 15px/20px "Liberation Serif", serif; }
.compare { display: grid; grid-template-columns: 1fr 1fr; height: 94px; margin: 16px 8px 18px 3px; background: #efefef; text-align: center; font: 17px/24px "Liberation Sans", Arial, sans-serif; color: #000; }
.target-tag { margin-left: 4px; }
.target { display: flex; align-items: center; justify-content: center; width: 145px; height: 112px; margin-left: 45px; border: 1px solid #222; background: conic-gradient(from 0deg, #38ff00, #ffc000 52deg, #f00 90deg, #ff0090 128deg, #9000c0 180deg, #0000ff 232deg, #0080a0 270deg, #00ff80 308deg, #38ff00); }
.measure-col { display: flex; flex-direction: column; width: 192px; }
.measure-tag { width: 160px; margin: 0 0 10px 13px; text-align: center; }
.measure-frame { flex: 1 1 0; min-height: 0; display: flex; border: 2px solid #808080; border-right-color: #fafafa; border-bottom-color: #fafafa; }
.measure-view { flex: 1; height: 450px; overflow: hidden; }
.measures { height: 460px; }
.measures th { width: 74px; padding: 0; border-right: 2px solid #858585; border-bottom: 2px solid #858585; background: #efefef; font-size: 14px; }
.measures td { background: #fff; border-bottom: 2px solid #cfcfcf; }
.measure-frame .vbar { width: 22px; }
.part { width: 19px; height: 263px; margin: 5px 0 auto; }

.info-body { display: flex; flex-direction: column; padding: 5px 0 6px 4px; }
.info-combo { width: 378px; }
.summary { flex: 1; margin: 10px 0 0 2px; padding: 1px 6px; border: 1px solid #777; }

/* page scroll bars */
.page-vbar { width: 25px; padding: 7px 3px 0 1px; }
.page-vbar .thumb { flex: 1; align-self: stretch; margin: 2px 0 30px; }
.page-hbar { height: 25px; padding: 0 27px 0 5px; border-bottom: 1px solid #ddd; justify-content: flex-start; }
.page-hbar .thumb { flex: 1; height: 19px; margin: 0 43px 0 5px; }

/* view tabs */
.tabstrip { display: flex; align-items: center; height: 25px; border-top: 2px solid #444; font: 12px/20px "Liberation Sans", Arial, sans-serif; }
.tab-nav { display: flex; border: 1px solid #222; border-right-width: 2px; }
.tab-nav button { width: 22px; height: 21px; }
.slant { width: 12px; height: 23px; }
.first { margin-left: -1px; }
.tab { height: 23px; padding: 0 6px; border-bottom: 1px solid #555; }
.tab.active { padding: 0 4px; background: #fff; font-weight: bold; font-size: 13px; }
.tab.wide { padding: 0 9px; }
.mask { width: 18px; height: 18px; margin-left: auto; }
.tab-reference { gap: 8px; margin: 0 6px 0 102px; font-size: 14px; }

.statusbar { display: flex; height: 24px; gap: 4px; background: linear-gradient(90deg, #e1e9f5, #eef3fb); border-bottom: 2px solid #444; font: 14px/22px "Noto Sans", sans-serif; }
.ready { flex: 1; padding: 1px 0 0 2px; }
.cell { border-top: 2px solid #a9bcd6; border-left: 1px solid #a9bcd6; padding-left: 3px; }
.cell-a { width: 93px; }
.cell-b { width: 35px; }
.cell-c { width: 41px; }
.cell-d { width: 40px; }
```
